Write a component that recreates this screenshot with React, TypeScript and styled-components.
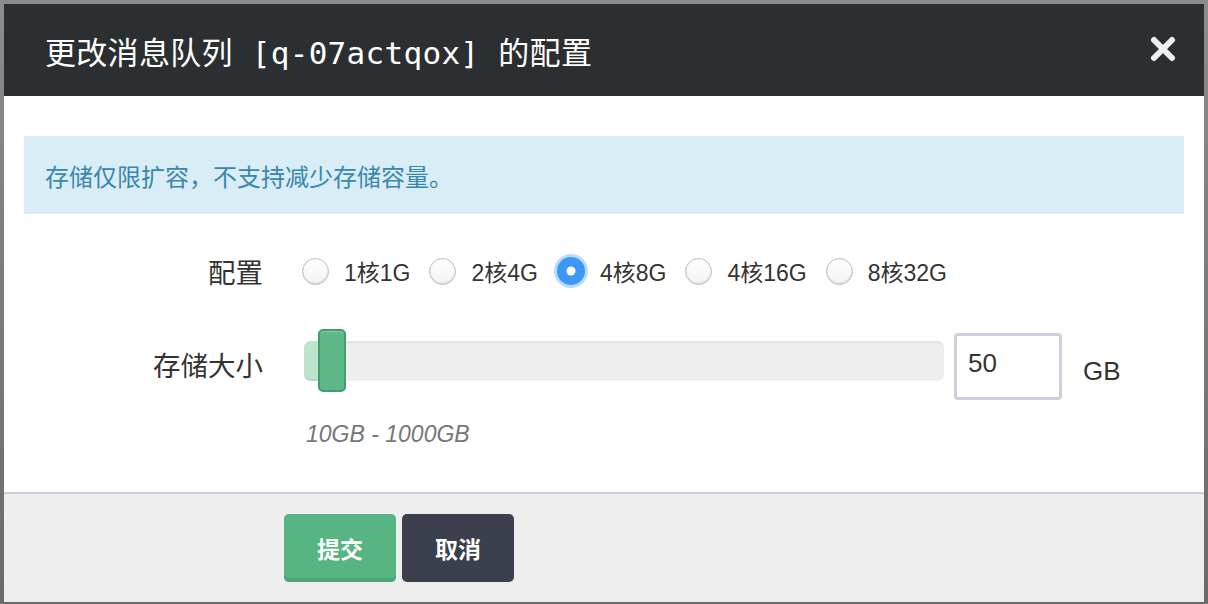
import React, { useState } from 'react';
import styled, { createGlobalStyle } from 'styled-components';

const GlobalStyle = createGlobalStyle`
  html, body {
    margin: 0;
    padding: 0;
  }
  body {
    background: linear-gradient(180deg, #8c8c8c 0%, #6a6a6a 100%);
    font-family: "Liberation Sans", "Noto Sans CJK SC", sans-serif;
    color: #333;
  }
  #root {
    padding: 4px 4px 2px 4px;
    width: 1200px;
  }
`;

const options = ['1核1G', '2核4G', '4核8G', '4核16G', '8核32G'];

const MIN = 10;
const MAX = 1000;

const App: React.FC = () => {
  const [selected, setSelected] = useState(2);
  const [size, setSize] = useState(50);

  const ratio = (size - MIN) / (MAX - MIN);
  const thumbLeft = 2 + ratio * 300;

  return (
    <>
      <GlobalStyle />
      <Dialog>
        <Header>
          <Title>更改消息队列 [q-07actqox] 的配置</Title>
          <CloseButton aria-label="close">
            <svg width="26" height="26" viewBox="0 0 26 26">
              <path d="M4 4 L22 22 M22 4 L4 22" stroke="#efefef" strokeWidth="6" strokeLinecap="round" />
            </svg>
          </CloseButton>
        </Header>
        <Body>
          <Alert>存储仅限扩容，不支持减少存储容量。</Alert>
          <FormRow>
            <Label>配置</Label>
            <RadioGroup>
              {options.map((opt, i) => (
                <RadioItem key={opt} onClick={() => setSelected(i)}>
                  <RadioCircle $checked={selected === i} />
                  <RadioText>{opt}</RadioText>
                </RadioItem>
              ))}
            </RadioGroup>
          </FormRow>
          <FormRow $tall>
            <Label>存储大小</Label>
            <SliderWrap>
              <Track>
                <Fill style={{ width: thumbLeft + 12 }} />
                <Thumb style={{ left: thumbLeft }} />
              </Track>
              <NumberInput
                value={size}
                onChange={(e) => setSize(Number(e.target.value) || MIN)}
              />
              <Unit>GB</Unit>
            </SliderWrap>
          </FormRow>
          <Hint>10GB - 1000GB</Hint>
        </Body>
        <Footer>
          <Button $variant="primary">提交</Button>
          <Button $variant="dark">取消</Button>
        </Footer>
      </Dialog>
    </>
  );
};

export default App;

const Dialog = styled.div`
  width: 1200px;
  background: #fff;
  display: flex;
  flex-direction: column;
`;

const Header = styled.div`
  height: 92px;
  background: #2b2f31;
  display: flex;
  align-items: center;
  justify-content: space-between;
  padding: 0 28px 0 41px;
`;

const Title = styled.h1`
  margin: 0;
  font-family: "DejaVu Sans Mono", "Noto Sans CJK SC", monospace;
  font-weight: normal;
  font-size: 31px;
  color: #fff;
  letter-spacing: 0.3px;
`;

const CloseButton = styled.div`
  width: 26px;
  height: 26px;
  display: flex;
  cursor: pointer;
  margin-top: -2px;
`;

const Body = styled.div`
  padding: 40px 20px 44px 20px;
  border-bottom: 2px solid #cfcddd;
`;

const Alert = styled.div`
  height: 78px;
  background: #d9edf7;
  color: #3a87ad;
  font-size: 24px;
  display: flex;
  align-items: center;
  padding-left: 21px;
`;

const FormRow = styled.div<{ $tall?: boolean }>`
  display: flex;
  align-items: center;
  height: 70px;
  margin-top: ${({ $tall }) => ($tall ? '23px' : '22px')};
`;

const Label = styled.div`
  width: 239px;
  text-align: right;
  font-size: 27.5px;
  color: #333;
  padding-right: 41px;
  flex-shrink: 0;
`;

const RadioGroup = styled.div`
  display: flex;
  align-items: center;
  gap: 19px;
  margin-left: -2px;
`;

const RadioItem = styled.label`
  display: flex;
  align-items: center;
  gap: 15px;
  cursor: pointer;
`;

const RadioCircle = styled.span<{ $checked: boolean }>`
  width: ${({ $checked }) => ($checked ? '28px' : '27px')};
  height: ${({ $checked }) => ($checked ? '28px' : '27px')};
  box-sizing: border-box;
  border-radius: 50%;
  position: relative;
  flex-shrink: 0;
  border: ${({ $checked }) => ($checked ? 'none' : '1px solid #bcbcbc')};
  background: ${({ $checked }) =>
    $checked ? '#3d97f7' : 'linear-gradient(180deg, #ffffff 0%, #f4f4f4 100%)'};
  box-shadow: ${({ $checked }) =>
    $checked ? '0 0 0 3px rgba(61, 151, 247, 0.35)' : 'inset 0 -1px 2px rgba(0, 0, 0, 0.12)'};

  &::after {
    content: '';
    display: ${({ $checked }) => ($checked ? 'block' : 'none')};
    position: absolute;
    width: 9px;
    height: 9px;
    border-radius: 50%;
    background: #fff;
    left: 50%;
    top: 50%;
    transform: translate(-50%, -50%);
  }
`;

const RadioText = styled.span`
  font-size: 23px;
  color: #333;
`;

const SliderWrap = styled.div`
  display: flex;
  align-items: center;
`;

const Track = styled.div`
  position: relative;
  width: 640px;
  height: 40px;
  margin-top: -6px;
  border-radius: 7px;
  background: #eeeeee;
  box-shadow: inset 0 2px 2px rgba(0, 0, 0, 0.05);
`;

const Fill = styled.div`
  height: 100%;
  border-radius: 7px 0 0 7px;
  background: #bde4cf;
  box-shadow: inset 0 -2px 0 rgba(0, 0, 0, 0.06);
`;

const Thumb = styled.div`
  position: absolute;
  top: -12px;
  width: 28px;
  height: 63px;
  box-sizing: border-box;
  border-radius: 5px;
  background: #5cb886;
  border: 2px solid #449d6d;
  box-shadow: inset 0 1px 0 rgba(255, 255, 255, 0.25);
`;

const NumberInput = styled.input`
  width: 108px;
  height: 67px;
  box-sizing: border-box;
  margin-left: 10px;
  margin-top: 4px;
  border: 3px solid #cfcddf;
  border-radius: 4px;
  padding: 0 0 6px 11px;
  font-family: "Liberation Sans", sans-serif;
  font-size: 26px;
  color: #333;
  outline: none;
  line-height: 1;
`;

const Unit = styled.span`
  font-size: 26px;
  color: #333;
  margin-left: 21px;
  margin-top: 14px;
`;

const Hint = styled.div`
  margin-top: 22px;
  padding-left: 282px;
  font-size: 23px;
  font-style: italic;
  color: #777;
`;

const Footer = styled.div`
  background: #eeeeee;
  height: 108px;
  box-sizing: border-box;
  padding: 20px 0 0 280px;
  display: flex;
  gap: 6px;
`;

const Button = styled.button<{ $variant: 'primary' | 'dark' }>`
  width: 112px;
  height: 68px;
  border: none;
  border-radius: 5px;
  font-family: "Liberation Sans", "Noto Sans CJK SC", sans-serif;
  font-size: 23px;
  font-weight: bold;
  color: #fff;
  cursor: pointer;
  background: ${({ $variant }) => ($variant === 'primary' ? '#56b583' : '#3c3f4e')};
  box-shadow: ${({ $variant }) =>
    $variant === 'primary' ? 'inset 0 -4px 0 #4ea777' : 'none'};
`;
